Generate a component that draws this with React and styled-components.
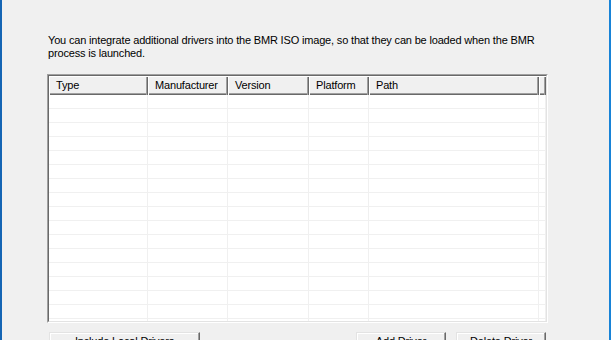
import React from 'react';
import styled, { createGlobalStyle } from 'styled-components';

const GlobalStyle = createGlobalStyle`
  html, body {
    margin: 0;
    padding: 0;
    background: #f0f0f0;
  }
  body {
    font-family: "Liberation Sans", Arial, sans-serif;
    font-size: 11px;
    letter-spacing: -0.17px;
    color: #000;
  }
`;

const Window = styled.div`
  width: 611px;
  height: 340px;
  box-sizing: border-box;
  overflow: hidden;
  background: #f0f0f0;
  border-left: 2px solid #1565b4;
  border-right: 2px solid #1883d7;
  padding: 34px 0 0 45px;
  display: flex;
  flex-direction: column;

  & > * {
    flex-shrink: 0;
  }
`;

const Description = styled.p`
  margin: 0 0 14px 1px;
  line-height: 13px;
  height: 26px;
`;

const ListView = styled.div`
  width: 501px;
  height: 249px;
  box-sizing: border-box;
  background: #fff;
  border-top: 1px solid #a0a0a0;
  border-left: 1px solid #a0a0a0;
  border-right: 1px solid #fff;
  border-bottom: 1px solid #fff;
  display: flex;
  flex-direction: column;
  overflow: hidden;
`;

const Inner = styled.div`
  flex: 1;
  display: flex;
  flex-direction: column;
  border-top: 1px solid #696969;
  border-left: 1px solid #696969;
  border-right: 1px solid #e3e3e3;
  border-bottom: 1px solid #e3e3e3;
  overflow: hidden;
`;

const columns = '99px 80px 81px 60px 170px 1fr';

const HeaderRow = styled.div`
  display: grid;
  grid-template-columns: ${columns};
  height: 19px;
  flex-shrink: 0;
  background: #f0f0f0;
`;

const HeaderCell = styled.div`
  box-sizing: border-box;
  padding: 2px 0 0 6px;
  border-top: 1px solid #fff;
  border-left: 1px solid #fff;
  box-shadow: inset -1px 0 0 #696969, inset -2px 0 0 #a0a0a0, inset 0 -1px 0 #696969, inset 0 -2px 0 #a0a0a0;
  white-space: nowrap;
  overflow: hidden;
  line-height: 13px;
`;

const Body = styled.div`
  flex: 1;
  overflow: hidden;
`;

const Row = styled.div`
  display: grid;
  grid-template-columns: ${columns};
  height: 14px;
  box-sizing: border-box;
  border-bottom: 1px solid #f0f0f0;
`;

const Cell = styled.div`
  border-right: 1px solid #f0f0f0;
`;

const ButtonBar = styled.div`
  width: 501px;
  display: flex;
  justify-content: space-between;
  padding: 9px 2px 0 2px;
  box-sizing: border-box;
`;

const ButtonGroup = styled.div`
  display: flex;
  gap: 10px;
`;

const Button = styled.button`
  width: ${p => p.$width}px;
  height: 23px;
  padding: 0 0 4px 0;
  font-family: inherit;
  font-size: 11px;
  line-height: 13px;
  letter-spacing: -0.17px;
  color: #000;
  background: #f0f0f0;
  border-top: 1px solid #e3e3e3;
  border-left: 1px solid #e3e3e3;
  border-right: 1px solid #696969;
  border-bottom: 1px solid #696969;
  box-shadow: inset -1px -1px 0 #a0a0a0, inset 1px 1px 0 #fff;
`;

const headers = ['Type', 'Manufacturer', 'Version', 'Platform', 'Path', ''];

export default function App() {
  return (
    <>
      <GlobalStyle />
      <Window>
        <Description>
          You can integrate additional drivers into the BMR ISO image, so that they can be loaded when the BMR
          <br />
          process is launched.
        </Description>
        <ListView>
          <Inner>
            <HeaderRow>
              {headers.map((h, i) => (
                <HeaderCell key={i}>{h}</HeaderCell>
              ))}
            </HeaderRow>
            <Body>
              {Array.from({ length: 17 }).map((_, r) => (
                <Row key={r}>
                  {headers.map((_, c) => (
                    <Cell key={c} />
                  ))}
                </Row>
              ))}
            </Body>
          </Inner>
        </ListView>
        <ButtonBar>
          <Button $width={151}>Include Local Drivers</Button>
          <ButtonGroup>
            <Button $width={90}>Add Driver</Button>
            <Button $width={90}>Delete Driver</Button>
          </ButtonGroup>
        </ButtonBar>
      </Window>
    </>
  );
}
